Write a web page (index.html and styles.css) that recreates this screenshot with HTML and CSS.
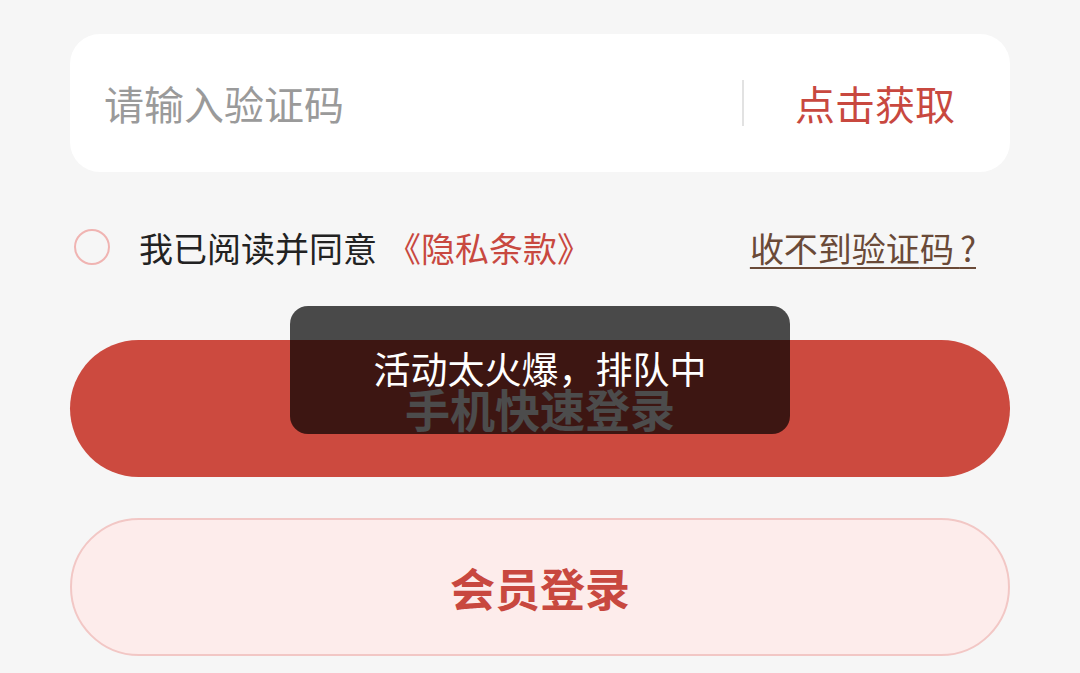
FILE: index.html
```html
<!DOCTYPE html>
<html lang="zh-CN">
<head>
<meta charset="utf-8">
<title>登录</title>
<link rel="stylesheet" href="styles.css">
</head>
<body>
<main class="page">
  <div class="code-card">
    <span class="code-input">请输入验证码</span>
    <span class="divider"></span>
    <span class="get-code">点击获取</span>
  </div>
  <div class="agree-row">
    <span class="check"></span>
    <span class="agree-text">我已阅读并同意<span class="privacy">《隐私条款》</span></span>
    <span class="no-code">收不到验证<span class="spaced">码</span>?</span>
  </div>
  <div class="btn btn-primary">手机快速登录</div>
  <div class="btn btn-member">会员登录</div>
  <div class="toast">活动太火爆，排队中</div>
</main>
</body>
</html>
```
FILE: styles.css
```css
html, body {
  margin: 0;
  padding: 0;
  background: #f6f6f6;
  font-family: "Noto Sans CJK SC", "Noto Sans", sans-serif;
}
.page {
  position: relative;
  width: 1080px;
  height: 673px;
  box-sizing: border-box;
  padding: 34px 70px 0;
  overflow: hidden;
}
.code-card {
  height: 138px;
  background: #ffffff;
  border-radius: 30px;
  display: flex;
  align-items: center;
  padding: 0 55px 0 34px;
}
.code-input {
  flex: 1;
  font-size: 40px;
  color: #9a9a9a;
}
.divider {
  width: 2px;
  height: 46px;
  background: #e2e2e2;
  margin-right: 51px;
}
.get-code {
  font-size: 40px;
  color: #c8483f;
}
.agree-row {
  display: flex;
  align-items: center;
  height: 40px;
  margin-top: 55px;
}
.check {
  width: 32px;
  height: 32px;
  border: 2px solid #f0b4b2;
  border-radius: 50%;
  margin-left: 4px;
  margin-right: 29px;
}
.agree-text {
  flex: 1;
  font-size: 34px;
  color: #222222;
}
.privacy {
  color: #c8483f;
  margin-left: 10px;
}
.no-code {
  font-size: 34px;
  color: #6a4a38;
  text-decoration: underline;
  text-underline-offset: 5px;
  text-decoration-thickness: 2px;
  margin-right: 32px;
  padding-right: 2px;
}
.spaced {
  letter-spacing: 6px;
}
.btn {
  height: 137px;
  border-radius: 69px;
  display: flex;
  align-items: center;
  justify-content: center;
  font-size: 45px;
  font-weight: 700;
  box-sizing: border-box;
}
.btn-primary {
  margin-top: 73px;
  background: #cc4a3f;
  color: #ffffff;
}
.btn-member {
  margin-top: 41px;
  height: 138px;
  background: #fdeceb;
  border: 2px solid #f2c7c5;
  color: #c8483f;
  font-size: 45px;
}
.toast {
  position: absolute;
  left: 290px;
  top: 306px;
  width: 500px;
  height: 128px;
  border-radius: 18px;
  background: rgba(0, 0, 0, 0.7);
  color: #ffffff;
  font-size: 37px;
  display: flex;
  align-items: center;
  justify-content: center;
  padding-bottom: 4px;
  box-sizing: border-box;
}
```
